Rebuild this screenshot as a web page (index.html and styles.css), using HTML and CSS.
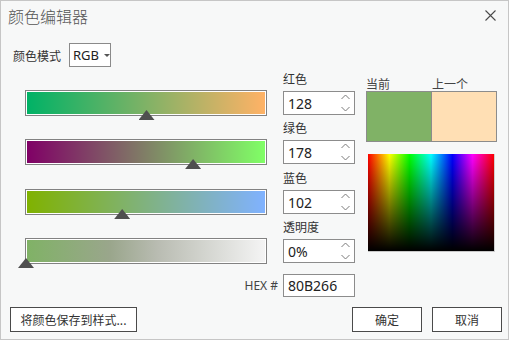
FILE: index.html
```html
<!DOCTYPE html>
<html lang="zh">
<head>
  <meta charset="UTF-8" />
  <title>颜色编辑器</title>
  <link rel="stylesheet" href="styles.css">
</head>
<body>
  <div class="dialog">
    <div class="titlebar">
      <span class="title">颜色编辑器</span>
      <svg class="close" width="11" height="11" viewBox="0 0 11 11">
        <path d="M0.5 0.5 L10.5 10.5 M10.5 0.5 L0.5 10.5" stroke="#4a4a4a" stroke-width="1.1" fill="none"/>
      </svg>
    </div>

    <div class="mode-row">
      <span class="mode-label">颜色模式</span>
      <div class="select">RGB<span class="caret"></span></div>
    </div>

    <div class="editor">
      <!-- barras -->
      <div class="sliders">
        <div class="track"><div class="fill fill-r"></div><span class="thumb" style="left: 120.5px"></span></div>
        <div class="track"><div class="fill fill-g"></div><span class="thumb" style="left: 167.1px"></span></div>
        <div class="track"><div class="fill fill-b"></div><span class="thumb" style="left: 96.2px"></span></div>
        <div class="track"><div class="fill fill-a"></div><span class="thumb" style="left: 0px"></span></div>
      </div>

      <!-- campos -->
      <div class="fields">
        <div class="field">
          <span class="field-label">红色</span>
          <div class="spin"><span class="spin-value">128</span>
            <svg class="spin-arrows" width="9" height="22" viewBox="0 0 9 22"><path d="M0.5 7 L4.5 3 L8.5 7 M0.5 15 L4.5 19 L8.5 15" stroke="#7a7a7a" stroke-width="1" fill="none"/></svg>
          </div>
        </div>
        <div class="field">
          <span class="field-label">绿色</span>
          <div class="spin"><span class="spin-value">178</span>
            <svg class="spin-arrows" width="9" height="22" viewBox="0 0 9 22"><path d="M0.5 7 L4.5 3 L8.5 7 M0.5 15 L4.5 19 L8.5 15" stroke="#7a7a7a" stroke-width="1" fill="none"/></svg>
          </div>
        </div>
        <div class="field">
          <span class="field-label">蓝色</span>
          <div class="spin"><span class="spin-value">102</span>
            <svg class="spin-arrows" width="9" height="22" viewBox="0 0 9 22"><path d="M0.5 7 L4.5 3 L8.5 7 M0.5 15 L4.5 19 L8.5 15" stroke="#7a7a7a" stroke-width="1" fill="none"/></svg>
          </div>
        </div>
        <div class="field">
          <span class="field-label">透明度</span>
          <div class="spin"><span class="spin-value">0%</span>
            <svg class="spin-arrows" width="9" height="22" viewBox="0 0 9 22"><path d="M0.5 7 L4.5 3 L8.5 7 M0.5 15 L4.5 19 L8.5 15" stroke="#7a7a7a" stroke-width="1" fill="none"/></svg>
          </div>
        </div>
      </div>

      <!-- muestras -->
      <div class="swatches">
        <div class="swatch-labels"><span class="swatch-cur">当前</span><span>上一个</span></div>
        <div class="compare"><div class="cur"></div><div class="prev"></div></div>
        <div class="spectrum"></div>
      </div>
    </div>

    <div class="hex-row">
      <span class="hex-label">HEX #</span>
      <div class="hex-input">80B266</div>
    </div>

    <div class="footer">
      <button class="btn btn-save">将颜色保存到样式...</button>
      <div class="footer-right">
        <button class="btn btn-small">确定</button>
        <button class="btn btn-small">取消</button>
      </div>
    </div>
  </div>
</body>
</html>
```

FILE: styles.css
```css
body {
  margin: 0;
  font-family: "Noto Sans", "Noto Sans CJK SC", sans-serif;
  background: #f7f8f8;
}

.dialog {
  width: 509px;
  height: 340px;
  box-sizing: border-box;
  border: 1px solid #c6c6c6;
  background: #f7f8f8;
  display: flex;
  flex-direction: column;
  color: #333;
  font-size: 12px;
}

.titlebar {
  height: 30px;
  display: flex;
  align-items: center;
  justify-content: space-between;
  padding: 0 12px 0 7px;
}

.title {
  font-family: "Noto Sans CJK SC", sans-serif;
  font-size: 16px;
  font-weight: 300;
  line-height: 28px;
  color: #555;
}

.close {
  margin-top: -2px;
}

.mode-row {
  display: flex;
  align-items: center;
  margin-top: 12px;
  padding-left: 12px;
  height: 24px;
}

.mode-label {
  font-family: "Noto Sans CJK SC", sans-serif;
  margin-right: 8px;
}

.select {
  width: 42px;
  height: 24px;
  box-sizing: border-box;
  border: 1px solid #8a8a8a;
  background: #fff;
  display: flex;
  align-items: center;
  padding-left: 3px;
  font-size: 13px;
  color: #222;
}

.caret {
  margin-left: 5px;
  width: 0;
  height: 0;
  border-left: 3px solid transparent;
  border-right: 3px solid transparent;
  border-top: 3px solid #555;
}

.editor {
  display: flex;
  margin-top: 3px;
}

/* barras de color */
.sliders {
  width: 242px;
  margin-left: 24px;
  margin-right: 16px;
  padding-top: 20px;
}

.track {
  position: relative;
  height: 26px;
  box-sizing: border-box;
  border: 1px solid #828282;
  padding: 1px;
  background: #fff;
  margin-bottom: 23px;
}

.track:nth-child(2) {
  margin-bottom: 24px;
}

.track:last-child {
  margin-bottom: 0;
}

.fill {
  height: 100%;
}

.fill-r { background: linear-gradient(to right, rgb(0,178,102), rgb(255,178,102)); }
.fill-g { background: linear-gradient(to right, rgb(128,0,102), rgb(128,255,102)); }
.fill-b { background: linear-gradient(to right, rgb(128,178,0), rgb(128,178,255)); }
.fill-a { background: linear-gradient(to right, #80b266, #9aa68c 35%, #b9bcb2 55%, #f4f4f4); }

.thumb {
  position: absolute;
  bottom: -5px;
  width: 16px;
  height: 10px;
  margin-left: -8px;
  background: #4f4f4f;
  clip-path: polygon(50% 0, 100% 100%, 0 100%);
}

/* campos numericos */
.fields {
  width: 72px;
}

.field {
  margin-bottom: 4px;
}

.field:nth-child(2) {
  margin-bottom: 5px;
}

.field-label {
  display: block;
  height: 18px;
  line-height: 18px;
  margin-bottom: 3px;
  font-family: "Noto Sans CJK SC", sans-serif;
}

.spin {
  height: 24px;
  box-sizing: border-box;
  border: 1px solid #8c8c8c;
  background: #fff;
  display: flex;
  align-items: center;
  padding-left: 4px;
  font-size: 14px;
  color: #222;
}

.spin-value {
  flex: 1;
}

.spin-arrows {
  margin-right: 4px;
}

/* muestras */
.swatches {
  width: 131px;
  margin-left: 11px;
  padding-top: 7px;
}

.swatch-labels {
  display: flex;
  line-height: 14px;
  font-family: "Noto Sans CJK SC", sans-serif;
  color: #444;
}

.swatch-cur {
  width: 66px;
}

.compare {
  display: flex;
  height: 51px;
  box-sizing: border-box;
  border: 1px solid #8c8c8c;
}

.cur {
  width: 64px;
  background: #80b266;
  border-right: 1px solid #8c8c8c;
}

.prev {
  flex: 1;
  background: #ffdfb4;
}

.spectrum {
  width: 127px;
  height: 98px;
  margin: 12px 0 0 2px;
  box-sizing: border-box;
  border-bottom: 1px solid #c8c8c8;
  border-right: 1px solid #d0d0d0;
  background:
    linear-gradient(to bottom, rgba(0,0,0,0), #000),
    linear-gradient(to right, #f00, #ff0 17%, #0f0 33%, #0ff 50%, #00f 67%, #f0f 83%, #f00);
}

.hex-row {
  display: flex;
  align-items: center;
  justify-content: flex-end;
  width: 330px;
  margin: 7px 0 0 24px;
}

.hex-label {
  margin-right: 5px;
  color: #444;
}

.hex-input {
  width: 72px;
  height: 23px;
  box-sizing: border-box;
  border: 1px solid #8c8c8c;
  background: #fff;
  padding-left: 4px;
  font-size: 14px;
  line-height: 21px;
  color: #222;
}

.footer {
  margin-top: auto;
  display: flex;
  justify-content: space-between;
  padding: 0 6px 7px 9px;
}

.footer-right {
  display: flex;
  gap: 10px;
}

.btn {
  height: 25px;
  box-sizing: border-box;
  border: 1px solid #4a4a4a;
  background: #fff;
  font-family: "Noto Sans CJK SC", sans-serif;
  font-size: 12px;
  color: #333;
  padding: 0;
}

.btn-save {
  width: 127px;
}

.btn-small {
  width: 70px;
}
```
